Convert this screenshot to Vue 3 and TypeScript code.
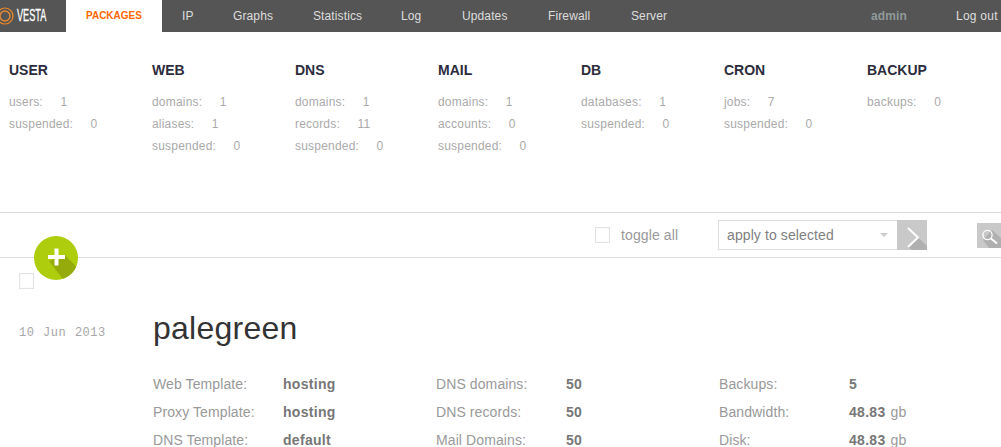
<script setup lang="ts">
const nav = [
  { t: 'IP', w: 51 }, { t: 'Graphs', w: 80 }, { t: 'Statistics', w: 88 }, { t: 'Log', w: 61 },
  { t: 'Updates', w: 86 }, { t: 'Firewall', w: 83 }, { t: 'Server', w: 80 },
]
const stats = [
  { h: 'USER', r: [['users:', '1'], ['suspended:', '0']] },
  { h: 'WEB', r: [['domains:', '1'], ['aliases:', '1'], ['suspended:', '0']] },
  { h: 'DNS', r: [['domains:', '1'], ['records:', '11'], ['suspended:', '0']] },
  { h: 'MAIL', r: [['domains:', '1'], ['accounts:', '0'], ['suspended:', '0']] },
  { h: 'DB', r: [['databases:', '1'], ['suspended:', '0']] },
  { h: 'CRON', r: [['jobs:', '7'], ['suspended:', '0']] },
  { h: 'BACKUP', r: [['backups:', '0']] },
]
const cols = [
  [['Web Template:', 'hosting', ''], ['Proxy Template:', 'hosting', ''], ['DNS Template:', 'default', '']],
  [['DNS domains:', '50', ''], ['DNS records:', '50', ''], ['Mail Domains:', '50', '']],
  [['Backups:', '5', ''], ['Bandwidth:', '48.83', 'gb'], ['Disk:', '48.83', 'gb']],
]
</script>

<template>
  <div class="page">
    <header class="topbar">
      <div class="logo">
        <svg class="logo-mark" width="18" height="18" viewBox="0 0 18 18">
          <circle cx="9" cy="9" r="8" fill="none" stroke="#f08a24" stroke-width="1.2" />
          <circle cx="9" cy="9" r="5" fill="none" stroke="#e98a30" stroke-width="1.4" />
        </svg>
        <span class="logo-text">VESTA</span>
      </div>
      <a class="tab active">PACKAGES</a>
      <a v-for="n in nav" :key="n.t" class="tab" :style="{ width: n.w + 'px' }">{{ n.t }}</a>
      <a class="user">admin</a>
      <a class="logout">Log out</a>
    </header>

    <section class="stats">
      <div v-for="s in stats" :key="s.h" class="stat">
        <h3>{{ s.h }}</h3>
        <div v-for="r in s.r" :key="r[0]" class="stat-row"><span>{{ r[0] }}</span><span class="num">{{ r[1] }}</span></div>
      </div>
    </section>

    <section class="toolbar">
      <button class="add" aria-label="add">
        <svg width="44" height="44" viewBox="0 0 44 44">
          <defs><clipPath id="c"><circle cx="22" cy="22" r="22" /></clipPath></defs>
          <circle cx="22" cy="22" r="22" fill="#aecd0c" />
          <path d="M15 25 L31 19 L52 41 L36 52 Z" fill="#95ab0c" clip-path="url(#c)" />
          <path d="M20.5 12.5h4v6.5h6.5v4h-6.5v6.5h-4v-6.5h-6.5v-4h6.5z" fill="#fff" />
        </svg>
      </button>
      <span class="check toggle-check"></span>
      <span class="toggle-label">toggle all</span>
      <div class="select"><span>apply to selected</span><i class="caret"></i></div>
      <button class="go" aria-label="apply">
        <svg width="30" height="30" viewBox="0 0 30 30">
          <path d="M21 17.5 L30 26 L30 30 L15 30 L11 27 Z" fill="#b0b0b0" />
          <path d="M11 8 L21 17.5 L11 27" fill="none" stroke="#fff" stroke-width="2" />
        </svg>
      </button>
      <button class="search" aria-label="search">
        <svg width="24" height="25" viewBox="0 0 24 25">
          <path d="M15 7 L24 15 L24 25 L12 25 L6 17 Z" fill="#b0b0b0" />
          <circle cx="10.5" cy="12" r="4.6" fill="none" stroke="#fff" stroke-width="1.3" />
          <path d="M14 15.5 L20 20.5" stroke="#fff" stroke-width="2" />
        </svg>
      </button>
    </section>

    <section class="item">
      <div class="side">
        <span class="check"></span>
        <div class="date">10 Jun 2013</div>
      </div>
      <div class="main">
        <h1>palegreen</h1>
        <div class="cols">
          <div v-for="(c, i) in cols" :key="i" class="col">
            <div v-for="r in c" :key="r[0]" class="row">
              <span class="lbl">{{ r[0] }}</span><b>{{ r[1] }}</b><span v-if="r[2]" class="unit">{{ r[2] }}</span>
            </div>
          </div>
        </div>
      </div>
    </section>
  </div>
</template>

<style>
html, body { margin: 0; background: #fff; overflow: hidden; }
</style>

<style scoped>
.page { width: 1001px; height: 447px; overflow: hidden; font-family: "Liberation Sans", Arial, sans-serif; }
.topbar { display: flex; height: 32px; background: #555; color: #ddd; font-size: 12px; letter-spacing: .12px; line-height: 32px; }
.logo { width: 66px; display: flex; align-items: center; overflow: hidden; flex: none; }
.logo-mark { margin-left: -4px; flex: none; }
.logo-text { color: #fff; font-size: 16px; font-weight: 400; letter-spacing: 0; margin-left: 3px; display: inline-block; transform: scaleX(.57); transform-origin: left; -webkit-text-stroke: .3px #fff; }
.tab { padding-left: 20px; box-sizing: border-box; white-space: nowrap; flex: none; }
.tab.active { background: #fff; color: #ff6701; font-size: 10px; font-weight: 700; width: 96px; letter-spacing: 0; }
.user { margin-left: auto; color: #909a9a; font-weight: 700; }
.logout { margin-left: 49px; width: 45px; white-space: nowrap; letter-spacing: .25px; }
.stats { display: flex; padding-left: 9px; box-sizing: border-box; border-bottom: 1px solid #d9d9d9; height: 181px; }
.stat { width: 143px; flex: none; }
.stat h3 { margin: 29px 0 12px; font-size: 14px; line-height: 18px; color: #2c2c3c; font-weight: 700; }
.stat-row { font-size: 12px; line-height: 22px; color: #aaa; letter-spacing: .2px; }
.num { margin-left: 17.5px; }
.toolbar { position: relative; height: 44px; border-bottom: 1px solid #ddd; }
.add { position: absolute; left: 34px; top: 23px; width: 44px; height: 44px; padding: 0; border: 0; background: none; z-index: 1; }
.add svg, .go svg, .search svg { display: block; }
.check { display: block; width: 13px; height: 14px; border: 1px solid #e2e2e2; box-shadow: inset 0 0 1px #ddd; }
.toggle-check { position: absolute; left: 595px; top: 14px; }
.toggle-label { position: absolute; left: 621px; top: 13px; font-size: 14px; line-height: 18px; color: #999; letter-spacing: .12px; }
.select { position: absolute; left: 718px; top: 7px; width: 170px; height: 28px; border: 1px solid #ddd; display: flex; align-items: center; padding-left: 8px; font-size: 14px; color: #808080; letter-spacing: .1px; }
.caret { position: absolute; right: 9px; top: 12px; border: 4px solid transparent; border-top-color: #ccc; border-bottom: 0; }
.go { position: absolute; left: 897px; top: 7px; width: 30px; height: 30px; padding: 0; border: 0; background: #c9c9c9; overflow: hidden; }
.search { position: absolute; left: 977px; top: 10px; width: 24px; height: 25px; padding: 0; border: 0; background: #c9c9c9; overflow: hidden; }
.item { display: flex; }
.side { width: 153px; flex: none; padding: 15px 0 0 19px; box-sizing: border-box; }
.date { margin-top: 37px; font-family: "Liberation Mono", monospace; font-size: 12px; line-height: 14px; color: #a6a6a6; letter-spacing: .5px; word-spacing: 1px; }
.main { flex: 1; }
h1 { margin: 50px 0 0; font-size: 32px; line-height: 40px; font-weight: 400; color: #333; letter-spacing: .25px; }
.cols { display: flex; margin-top: 22px; }
.col { width: 283px; flex: none; }
.row { height: 28px; line-height: 28px; font-size: 14px; color: #999; white-space: nowrap; display: flex; letter-spacing: .1px; }
.lbl { width: 130px; flex: none; }
.row b { color: #777; letter-spacing: .3px; }
.unit { margin-left: 5px; }
</style>
